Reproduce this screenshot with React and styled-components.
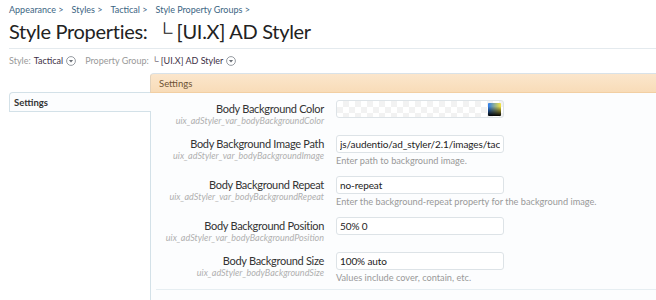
import styled, { createGlobalStyle } from "styled-components";

const GlobalStyle = createGlobalStyle`
  html, body {
    margin: 0;
    padding: 0;
    background: #fff;
    overflow: hidden;
  }
  body {
    font-family: Lato, "Open Sans", sans-serif;
    color: #333;
  }
`;

const rows = [
  { label: "Body Background Color", name: "uix_adStyler_var_bodyBackgroundColor", color: true },
  { label: "Body Background Image Path", name: "uix_adStyler_var_bodyBackgroundImage", value: "js/audentio/ad_styler/2.1/images/tactical/bg.jpg", hint: "Enter path to background image." },
  { label: "Body Background Repeat", name: "uix_adStyler_var_bodyBackgroundRepeat", value: "no-repeat", hint: "Enter the background-repeat property for the background image." },
  { label: "Body Background Position", name: "uix_adStyler_var_bodyBackgroundPosition", value: "50% 0" },
  { label: "Body Background Size", name: "uix_adStyler_bodyBackgroundSize", value: "100% auto", hint: "Values include cover, contain, etc." },
];

export default function App() {
  return (
    <Page>
      <GlobalStyle />
      <Breadcrumb>
        <Crumb>Appearance &gt;</Crumb>
        <Crumb>Styles &gt;</Crumb>
        <Crumb>Tactical &gt;</Crumb>
        <Crumb>Style Property Groups &gt;</Crumb>
      </Breadcrumb>
      <Title>Style Properties: &nbsp;└ [UI.X] AD Styler</Title>
      <Filters>
        <Filter>
          Style: <FilterValue>Tactical</FilterValue>
          <Chooser />
        </Filter>
        <Filter>
          Property Group: <FilterValue>└ [UI.X] AD Styler</FilterValue>
          <Chooser />
        </Filter>
      </Filters>
      <Layout>
        <Sidebar>
          <SideTab>Settings</SideTab>
          <SideRest />
        </Sidebar>
        <Main>
          <SectionHeader>Settings</SectionHeader>
          <Form>
            {rows.map((row) => (
              <Row key={row.name}>
                <LabelCell>
                  <Label>{row.label}</Label>
                  <PropName>{row.name}</PropName>
                </LabelCell>
                <Control>
                  {row.color ? (
                    <ColorInput>
                      <Swatch />
                    </ColorInput>
                  ) : (
                    <TextInput readOnly value={row.value} />
                  )}
                  {row.hint && <Hint>{row.hint}</Hint>}
                </Control>
              </Row>
            ))}
          </Form>
          <Divider />
        </Main>
      </Layout>
    </Page>
  );
}

function Chooser() {
  return (
    <ChooserIcon width="10" height="10" viewBox="0 0 10 10">
      <circle cx="5" cy="5" r="4.4" fill="#fff" stroke="#8a8f96" strokeWidth="0.9" />
      <path d="M2.9 4 L7.1 4 L5 6.6 Z" fill="#6a6f76" />
    </ChooserIcon>
  );
}

const Page = styled.div`
  width: 656px;
  height: 300px;
  padding: 4px 0 0 9px;
  box-sizing: border-box;
  background: #fff;
`;

const Breadcrumb = styled.div`
  display: flex;
  gap: 8px;
  font-size: 9px;
  line-height: 12px;
  color: #3c6583;
`;

const Crumb = styled.span``;

const Title = styled.h1`
  margin: 2px 0 0;
  font-size: 20px;
  letter-spacing: -0.3px;
  font-weight: normal;
  line-height: 27px;
  color: #222;
  padding-bottom: 3px;
  border-bottom: 1px solid #e4eaee;
`;

const Filters = styled.div`
  display: flex;
  gap: 9px;
  margin-top: 5px;
  font-size: 9px;
  line-height: 14px;
  color: #999;
`;

const Filter = styled.span`
  display: inline-flex;
  align-items: center;
  gap: 3px;
`;

const FilterValue = styled.span`
  color: #3d2f45;
`;

const ChooserIcon = styled.svg`
  display: block;
`;

const Layout = styled.div`
  display: flex;
  margin-top: 6px;
`;

const Sidebar = styled.div`
  width: 142px;
  flex: none;
  display: flex;
  flex-direction: column;
  padding-top: 18px;
`;

const SideTab = styled.div`
  height: 20px;
  box-sizing: border-box;
  padding: 3px 4px;
  font-size: 9.5px;
  line-height: 13px;
  font-weight: 700;
  color: #333;
  border: 1px solid #d3e1e8;
  border-right: none;
  border-radius: 4px 0 0 0;
  background: #fcfdfe;
`;

const SideRest = styled.div`
  flex: 1;
  border-right: 1px solid #d3e1e8;
  min-height: 200px;
`;

const Main = styled.div`
  flex: 1;
  min-width: 0;
  background: #fcfdfe;
`;

const SectionHeader = styled.div`
  height: 20px;
  box-sizing: border-box;
  padding: 3px 8px;
  font-size: 9.5px;
  line-height: 13px;
  color: #6e5234;
  background: linear-gradient(#fbe6cc, #f8dcb8);
  border-top: 1px solid #d9e2e8;
  border-left: 1px solid #e2d2bc;
  border-bottom: 1px solid #f2cfa3;
  border-radius: 4px 0 0 0;
  margin-left: -1px;
  margin-top: -1px;
`;

const Form = styled.div`
  display: flex;
  flex-direction: column;
  gap: 9px;
  padding-top: 7px;
`;

const Row = styled.div`
  display: grid;
  grid-template-columns: 173px 1fr;
  column-gap: 12px;
  align-items: start;
`;

const LabelCell = styled.div`
  text-align: right;
  padding-top: 2px;
`;

const Label = styled.div`
  font-size: 11px;
  letter-spacing: -0.3px;
  line-height: 14px;
  color: #333;
`;

const PropName = styled.div`
  font-size: 9px;
  line-height: 10px;
  font-style: italic;
  color: #b0b0b0;
  white-space: nowrap;
`;

const Control = styled.div`
  display: flex;
  flex-direction: column;
  align-items: flex-start;
`;

const inputBox = `
  width: 168px;
  height: 18px;
  box-sizing: border-box;
  border: 1px solid #dde3e7;
  border-radius: 3px;
  background: #fff;
`;

const TextInput = styled.input`
  ${inputBox}
  padding: 0 3px;
  font-family: inherit;
  font-size: 10px;
  letter-spacing: -0.1px;
  color: #222;
  outline: none;
`;

const ColorInput = styled.div`
  ${inputBox}
  display: flex;
  justify-content: flex-end;
  align-items: center;
  padding-right: 2px;
  background-color: #fff;
  background-image:
    linear-gradient(45deg, #f2f2f2 25%, transparent 25%, transparent 75%, #f2f2f2 75%),
    linear-gradient(45deg, #f2f2f2 25%, transparent 25%, transparent 75%, #f2f2f2 75%);
  background-size: 12px 12px;
  background-position: 0 0, 6px 6px;
`;

const Swatch = styled.div`
  width: 13px;
  height: 13px;
  background:
    linear-gradient(to bottom, rgba(0, 0, 0, 0) 25%, #000),
    linear-gradient(to right, #2a7cf0, #f7e43a);
  border-radius: 1px;
`;

const Hint = styled.div`
  margin-top: 2px;
  font-size: 9.2px;
  line-height: 12px;
  color: #999;
  white-space: nowrap;
`;

const Divider = styled.div`
  margin: 5px 0 0 5px;
  border-top: 1px solid #e6eef2;
`;
